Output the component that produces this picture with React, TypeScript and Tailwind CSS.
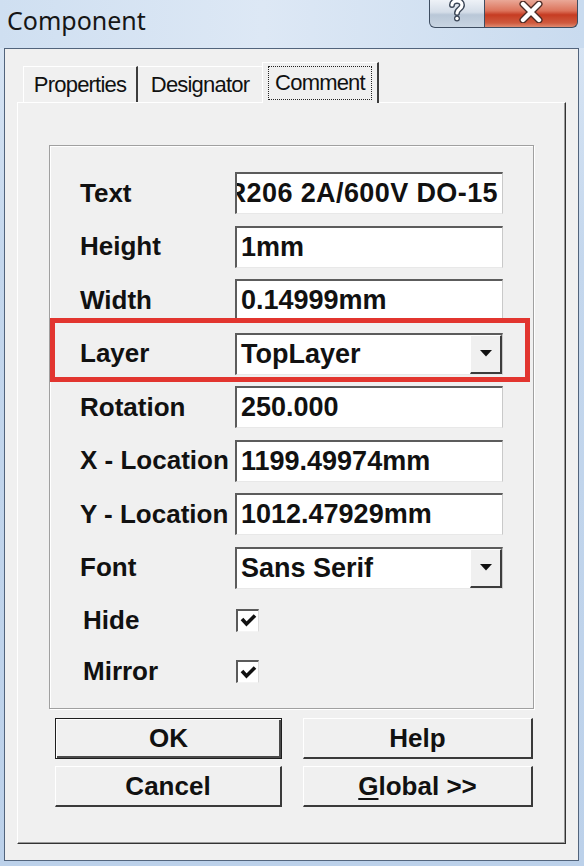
import React from "react";

type Row = {
  label: string;
  value: string;
  combo?: boolean;
  marked?: boolean;
  clipLeft?: boolean;
};

const rows: Row[] = [
  { label: "Text", value: "GPP R206 2A/600V DO-15", clipLeft: true },
  { label: "Height", value: "1mm" },
  { label: "Width", value: "0.14999mm" },
  { label: "Layer", value: "TopLayer", combo: true, marked: true },
  { label: "Rotation", value: "250.000" },
  { label: "X - Location", value: "1199.49974mm" },
  { label: "Y - Location", value: "1012.47929mm" },
  { label: "Font", value: "Sans Serif", combo: true },
];

function HelpButton() {
  return (
    <div className="w-[56px] h-[28px] flex items-start justify-center rounded-bl-[6px] border border-t-0 border-[#3e4d61] bg-[linear-gradient(180deg,#eef2f7_0%,#d4dde8_45%,#b9c7d7_55%,#c9d5e2_100%)]">
      <svg width="20" height="25" viewBox="0 0 20 25" className="mt-[-2px]">
        <path d="M5 7 C5 1.5 15 1.5 15 7 C15 11 10 11 10 15" fill="none" stroke="#3b4656" strokeWidth="6" strokeLinecap="round" />
        <circle cx="10" cy="20.5" r="3" fill="#3b4656" />
        <path d="M5 7 C5 1.5 15 1.5 15 7 C15 11 10 11 10 15" fill="none" stroke="#ffffff" strokeWidth="3.2" strokeLinecap="round" />
        <circle cx="10" cy="20.5" r="1.7" fill="#ffffff" />
      </svg>
    </div>
  );
}

function CloseButton() {
  return (
    <div className="w-[93px] h-[28px] flex items-start justify-center rounded-br-[6px] border border-t-0 border-l-0 border-[#3e4d61] bg-[linear-gradient(180deg,#eaa897_0%,#dc735b_40%,#c63c22_55%,#cf5a3e_85%,#e08a70_100%)]">
      <svg width="26" height="22" viewBox="0 0 26 22" className="mt-[1px]">
        <path d="M5 3 L21 19 M21 3 L5 19" stroke="#4a2a24" strokeWidth="7" strokeLinecap="round" />
        <path d="M5 3 L21 19 M21 3 L5 19" stroke="#ffffff" strokeWidth="4.4" strokeLinecap="round" />
      </svg>
    </div>
  );
}

function DropArrow() {
  return (
    <div className="w-[32px] h-full shrink-0 flex items-center justify-center bg-[#f0f0f0] border-t border-l border-t-white border-l-white border-r-2 border-b-2 border-r-[#3c3c3c] border-b-[#3c3c3c]">
      <svg width="12" height="7" viewBox="0 0 12 7">
        <polygon points="0,0 12,0 6,6.5" fill="#111" />
      </svg>
    </div>
  );
}

function Field({ row }: { row: Row }) {
  return (
    <div className="w-[268px] h-[42px] flex items-stretch bg-white border-t-2 border-l-2 border-t-[#5c5c5c] border-l-[#5c5c5c] border-r border-b border-r-[#c9c9c9] border-b-[#e8e8e8]">
      <div
        className={
          row.clipLeft
            ? "flex-1 min-w-0 flex items-center justify-end overflow-hidden pr-[4px] whitespace-nowrap text-[27px] font-bold tracking-[0.4px]"
            : "flex-1 min-w-0 flex items-center overflow-hidden pl-[4px] whitespace-nowrap text-[27px] font-bold"
        }
      >
        <span className="shrink-0">{row.value}</span>
      </div>
      {row.combo && <DropArrow />}
    </div>
  );
}

function CheckBox() {
  return (
    <div className="w-[23px] h-[23px] bg-white border-t-2 border-l-2 border-t-[#5a5a5a] border-l-[#5a5a5a] border-r border-b border-r-[#dcdcdc] border-b-[#f4f4f4] flex items-center justify-center">
      <svg width="17" height="15" viewBox="0 0 17 15">
        <path d="M2 6 L6.5 11 L15 2.5" fill="none" stroke="#111" strokeWidth="3.6" />
      </svg>
    </div>
  );
}

function DialogButton({ children, isDefault }: { children: React.ReactNode; isDefault?: boolean }) {
  return (
    <div
      className={
        isDefault
          ? "h-[41px] flex items-center justify-center bg-[#f0f0f0] border border-[#1e1e1e] shadow-[inset_1px_1px_0_#ffffff,inset_-2px_-2px_0_#4a4a4a] text-[26px] font-bold"
          : "h-[41px] flex items-center justify-center bg-[#f0f0f0] border-t border-l border-t-white border-l-white border-r-2 border-b-2 border-r-[#3a3a3a] border-b-[#3a3a3a] text-[26px] font-bold"
      }
    >
      {children}
    </div>
  );
}

export default function App() {
  return (
    <div className="w-[584px] h-[866px] flex flex-col overflow-hidden bg-[linear-gradient(180deg,#c6d9ef_0%,#d8e5f4_4%,#c4d7ed_30%,#bcd1ea_100%)] font-['Liberation_Sans',Arial,sans-serif] text-[#111]">
      {/* title bar */}
      <div className="h-[48px] shrink-0 flex items-start bg-[linear-gradient(90deg,#cfdff1_0%,#dde8f5_45%,#c9dbef_100%)]">
        <div className="pl-[7px] pt-[3px] text-[25px] leading-[34px] font-['Noto_Sans',sans-serif] text-[#161616]">
          Component
        </div>
        <div className="ml-auto mr-[6px] flex">
          <HelpButton />
          <CloseButton />
        </div>
      </div>

      {/* client area */}
      <div className="flex-1 ml-[4px] mr-[5px] mb-[5px] border border-[#52647c] bg-[#f0f0f0] px-[12px] pt-[13px] pb-[16px] flex flex-col">
        {/* tabs */}
        <div className="h-[40px] flex items-end pl-[6px] text-[22px] tracking-[-0.8px]">
          <div className="w-[115px] h-[36px] flex items-center justify-center border-t border-l border-white border-r-2 border-r-[#3c3c3c]">
            Properties
          </div>
          <div className="w-[124px] h-[36px] flex items-center justify-center border-t border-white">
            Designator
          </div>
          <div className="relative z-10 -mb-px w-[117px] h-[41px] flex items-center justify-center bg-[#f0f0f0] border-t border-l border-white border-r-2 border-r-[#3c3c3c]">
            <span className="border border-dotted border-[#222] px-[6px] leading-[32px]">Comment</span>
          </div>
        </div>

        {/* tab page */}
        <div className="flex-1 border-t border-l border-white border-r border-b border-r-[#333] border-b-[#333] shadow-[inset_-1px_-1px_0_#9a9a9a] pl-[31px] pt-[42px]">
          {/* group box */}
          <div className="w-[485px] h-[564px] border border-[#a0a0a0] shadow-[inset_1px_1px_0_#ffffff,1px_1px_0_#ffffff] pl-[30px] pt-[26px] flex flex-col gap-[11.5px]">
            {rows.map((row) => (
              <div key={row.label} className="relative h-[42px] flex items-center">
                <div className="w-[155px] text-[26px] font-bold whitespace-nowrap">{row.label}</div>
                <Field row={row} />
                {row.marked && (
                  <div className="absolute left-[-30px] top-[-15px] w-[480px] h-[64px] border-[5px] border-[#e2352f]" />
                )}
              </div>
            ))}
            {["Hide", "Mirror"].map((label) => (
              <div key={label} className="h-[40px] flex items-center">
                <div className="w-[156px] pl-[3px] text-[26px] font-bold">{label}</div>
                <CheckBox />
              </div>
            ))}
          </div>

          {/* buttons */}
          <div className="ml-[6px] mt-[9px] grid grid-cols-[227px_230px] gap-x-[21px] gap-y-[7px]">
            <DialogButton isDefault>OK</DialogButton>
            <DialogButton>Help</DialogButton>
            <DialogButton>Cancel</DialogButton>
            <DialogButton>
              <span>
                <span className="underline underline-offset-[3px]">G</span>lobal &gt;&gt;
              </span>
            </DialogButton>
          </div>
        </div>
      </div>
    </div>
  );
}
